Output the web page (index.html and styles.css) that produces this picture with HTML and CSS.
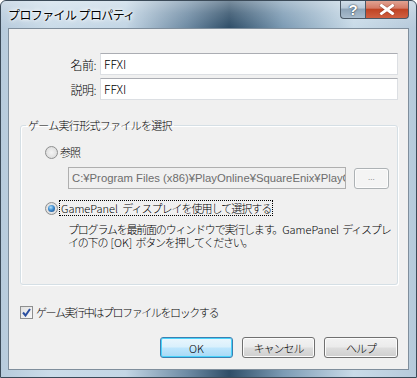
FILE: index.html
```html
<!DOCTYPE html>
<html lang="ja">
<head>
<meta charset="utf-8">
<link rel="stylesheet" href="styles.css">
</head>
<body>
<div class="window">
  <div class="titlebar">
    <span class="title">プロファイル プロパティ</span>
    <div class="caption-btns">
      <div class="cbtn help">?</div>
      <div class="cbtn close">
        <svg width="16" height="11" viewBox="0 0 16 11"><path d="M2.5 1.5 L13.5 9.5 M13.5 1.5 L2.5 9.5" stroke="#6a2a20" stroke-width="4.2" stroke-linecap="square" opacity="0.35"/><path d="M2.5 1.5 L13.5 9.5 M13.5 1.5 L2.5 9.5" stroke="#ffffff" stroke-width="2.8" stroke-linecap="square"/></svg>
      </div>
    </div>
  </div>
  <div class="client">
    <div class="field-row">
      <span class="label">名前:</span>
      <div class="input">FFXI</div>
    </div>
    <div class="field-row second">
      <span class="label">説明:</span>
      <div class="input">FFXI</div>
    </div>
    <fieldset class="group">
      <legend>ゲーム実行形式ファイルを選択</legend>
      <div class="radio-row first">
        <span class="radio"></span><span class="rtext">参照</span>
      </div>
      <div class="path-row">
        <div class="path">C:¥Program Files (x86)¥PlayOnline¥SquareEnix¥PlayOnlineViewer</div>
        <div class="btn browse">...</div>
      </div>
      <div class="radio-row second">
        <span class="radio checked"></span><span class="rtext focus"><span class="lat">GamePanel</span> ディスプレイを使用して選択する</span>
      </div>
      <p class="desc">プログラムを最前面のウィンドウで実行します。<span class="lat">GamePanel</span> ディスプレ<br>イの下の <span class="lat">[OK]</span> ボタンを押してください。</p>
    </fieldset>
    <div class="check-row">
      <span class="checkbox"><svg width="9" height="9" viewBox="0 0 9 9"><path d="M1 4.5 L3.5 7.5 L8 1" stroke="#2b4fa0" stroke-width="2" fill="none"/></svg></span>
      <span class="ctext">ゲーム実行中はプロファイルをロックする</span>
    </div>
    <div class="buttons">
      <div class="btn default"><span class="lat">OK</span></div>
      <div class="btn">キャンセル</div>
      <div class="btn help-btn">ヘルプ</div>
    </div>
  </div>
</div>
</body>
</html>
```

FILE: styles.css
```css
html, body {
  margin: 0;
  padding: 0;
  background: #ffffff;
}
body {
  font-family: "Noto Sans CJK JP", "Liberation Sans", sans-serif;
  font-size: 11px;
  font-weight: 300;
  color: #000;
}
.lat {
  letter-spacing: 0;
  font-size: 11px;
}
.window {
  width: 417px;
  height: 378px;
  box-sizing: border-box;
  border: 1px solid #3b4a58;
  border-radius: 6px 6px 0 0;
  background: linear-gradient(to right, #b7cbdc 0%, #cbdce9 12%, #c3d6e5 30%, #6d8aa3 45%, #2f4e68 55%, #7c9bb4 68%, #c9dbe8 85%, #b6cadb 100%);
  display: flex;
  flex-direction: column;
  overflow: hidden;
}
.titlebar {
  height: 27px;
  display: flex;
  justify-content: space-between;
  align-items: flex-start;
  padding: 0 7px 0 7px;
  background: linear-gradient(to bottom, rgba(255,255,255,0.35) 0%, rgba(255,255,255,0.15) 45%, rgba(255,255,255,0) 100%);
}
.title {
  margin-top: 6px;
  font-size: 12px;
  font-weight: 400;
  letter-spacing: -0.6px;
  line-height: 16px;
  color: #000;
  text-shadow: 0 0 6px #ffffff, 0 0 4px #ffffff, 0 0 2px #ffffff;
}
.caption-btns {
  display: flex;
  margin-top: -1px;
}
.cbtn {
  height: 19px;
  box-sizing: border-box;
  border: 1px solid #4a5866;
  border-top: none;
  display: flex;
  align-items: center;
  justify-content: center;
}
.cbtn.help {
  width: 25px;
  border-radius: 0 0 0 4px;
  border-right: none;
  background: linear-gradient(to bottom, #d4e1ec 0%, #b8c9d8 45%, #8ea4b8 50%, #a9bccd 100%);
  color: #ffffff;
  font-family: "Liberation Sans", sans-serif;
  font-weight: bold;
  font-size: 15px;
  text-shadow: 0 0 2px #334455, 0 0 1px #334455;
}
.cbtn.close {
  width: 44px;
  border-radius: 0 0 4px 0;
  background: linear-gradient(to bottom, #e2a898 0%, #d47b66 45%, #c04424 52%, #d06042 100%);
}
.client {
  margin: 0 7px;
  height: 342px;
  box-sizing: border-box;
  border: 1px solid #7f8e9c;
  background: #f0f0f0;
  padding: 24px 10px 0 0;
  display: flex;
  flex-direction: column;
}
.field-row {
  display: flex;
  align-items: center;
  height: 22px;
}
.field-row.second {
  margin-top: 3px;
}
.label {
  width: 87px;
  text-align: right;
  margin-right: 4px;
  font-size: 12px;
  letter-spacing: -0.5px;
}
.input {
  flex: 1;
  height: 22px;
  box-sizing: border-box;
  border: 1px solid #dcdfe3;
  border-top-color: #abadb3;
  background: #ffffff;
  padding: 2px 3px;
  line-height: 16px;
  font-size: 12px;
}
.group {
  margin: 17px 0 0 11px;
  padding: 0 0 0 24px;
  height: 168px;
  box-sizing: border-box;
  border: 1px solid #d5dfe5;
  border-radius: 3px;
  box-shadow: inset 1px 1px 0 #ffffff, 1px 1px 0 #ffffff;
  min-width: 0;
}
.group legend {
  padding: 0 2px;
  margin-left: -19px;
  line-height: 16px;
  font-size: 11px;
  letter-spacing: -0.7px;
}
.radio-row {
  display: flex;
  align-items: center;
  height: 16px;
}
.radio-row.first {
  margin-top: 11px;
}
.radio-row.second {
  margin-top: 11px;
}
.radio {
  width: 13px;
  height: 13px;
  box-sizing: border-box;
  border-radius: 50%;
  border: 1px solid #8e8f8f;
  background: radial-gradient(circle at 50% 50%, #f4f4f4 0%, #e2e2e2 60%, #d2d2d2 100%);
  margin-right: 2px;
  position: relative;
  flex: none;
}
.radio.checked::after {
  content: "";
  position: absolute;
  left: 2px;
  top: 2px;
  width: 7px;
  height: 7px;
  border-radius: 50%;
  background: radial-gradient(circle at 40% 35%, #b6e1fb 0%, #3d8dd1 45%, #173e79 100%);
}
.rtext {
  letter-spacing: -1px;
  word-spacing: 3px;
  line-height: 14px;
}
.rtext.focus {
  outline: 1px dotted #000;
  padding: 0 1px;
}
.path-row {
  display: flex;
  align-items: center;
  margin-top: 7px;
  margin-left: 23px;
}
.path {
  width: 278px;
  height: 22px;
  box-sizing: border-box;
  border: 1px solid #afafaf;
  background: #f0f0f0;
  color: #6d6d6d;
  padding: 2px 3px;
  line-height: 16px;
  white-space: nowrap;
  overflow: hidden;
  font-family: "Liberation Sans", sans-serif;
  font-weight: 400;
  font-size: 11.3px;
}
.btn {
  height: 21px;
  box-sizing: border-box;
  border: 1px solid #707070;
  border-radius: 3px;
  background: linear-gradient(to bottom, #f2f2f2 0%, #ebebeb 48%, #dddddd 52%, #cfcfcf 100%);
  box-shadow: inset 0 0 0 1px #fcfcfc;
  display: flex;
  align-items: center;
  justify-content: center;
  font-size: 11px;
  letter-spacing: -1px;
}
.btn.browse {
  width: 35px;
  margin-left: 8px;
  border-color: #adb2b5;
  background: #f4f4f4;
  color: #838383;
  font-size: 9px;
  letter-spacing: 0;
  padding-bottom: 4px;
}
.desc {
  margin: 7px 0 0 23px;
  line-height: 13px;
  font-size: 11px;
  letter-spacing: -1.2px;
  word-spacing: 2px;
  white-space: nowrap;
}
.check-row {
  display: flex;
  align-items: center;
  height: 16px;
  margin: 19px 0 0 11px;
}
.checkbox {
  width: 13px;
  height: 13px;
  box-sizing: border-box;
  border: 1px solid #8e8f8f;
  background: linear-gradient(135deg, #e0e0e0, #f8f8f8);
  display: flex;
  align-items: center;
  justify-content: center;
  margin-right: 3px;
}
.ctext {
  letter-spacing: -1.4px;
}
.buttons {
  display: flex;
  justify-content: flex-end;
  gap: 9px;
  margin-top: 17px;
}
.buttons .btn {
  width: 73px;
}
.buttons .btn.help-btn {
  width: 74px;
}
.btn.default {
  border-color: #3c7fb1;
  background: linear-gradient(to bottom, #eaf6fd 0%, #d9f0fc 48%, #bee6fd 52%, #a7d9f5 100%);
  box-shadow: inset 0 0 0 1px #48d3fb;
}
```
